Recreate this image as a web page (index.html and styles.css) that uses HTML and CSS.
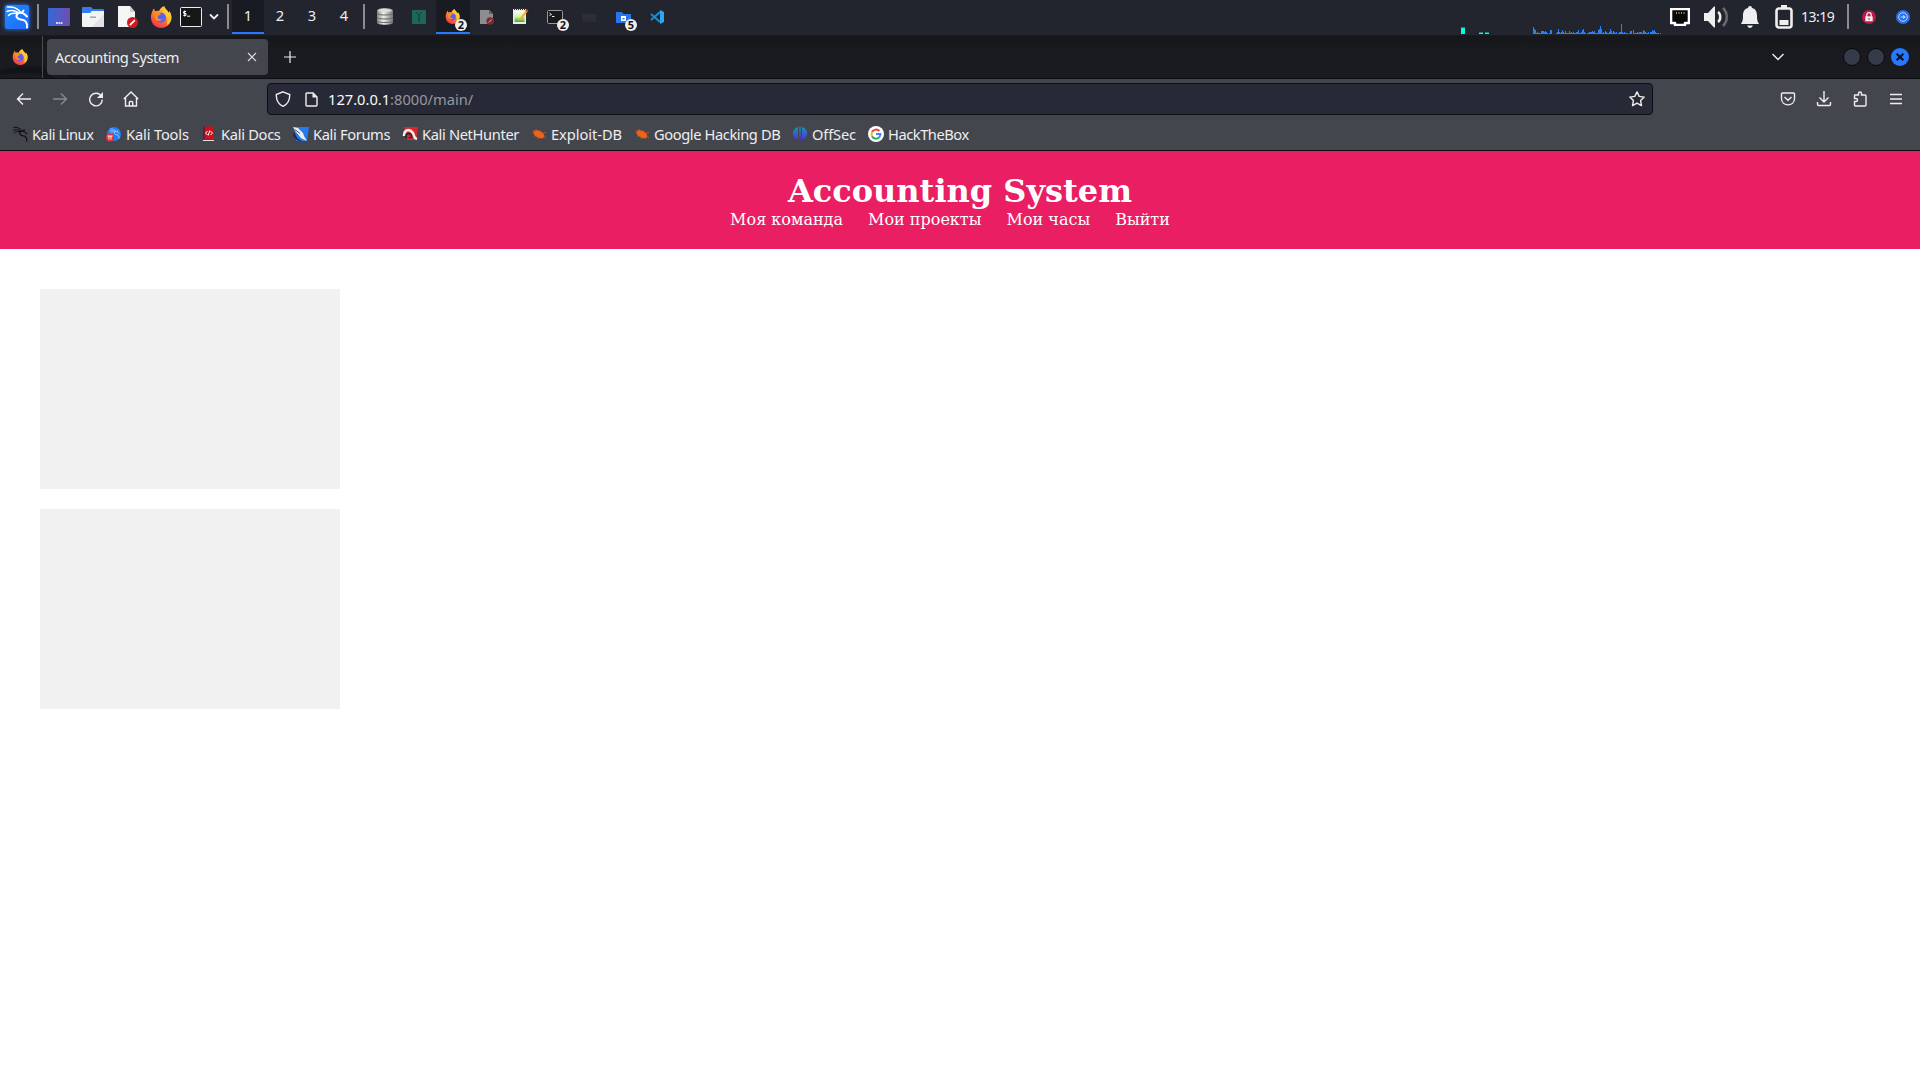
FILE: index.html
```html
<!DOCTYPE html>
<html lang="ru">
<head>
<meta charset="utf-8">
<title>Accounting System</title>
<link rel="stylesheet" href="styles.css">
</head>
<body>
<svg class="defs" width="0" height="0">
  <defs>
    <linearGradient id="fire" x1="0.8" y1="0" x2="0.3" y2="1"><stop offset="0" stop-color="#ffe14a"/><stop offset=".45" stop-color="#ff8a24"/><stop offset="1" stop-color="#f5304e"/></linearGradient>
    <linearGradient id="desk"><stop offset="0" stop-color="#3469d8"/><stop offset="1" stop-color="#704daf"/></linearGradient>
    <linearGradient id="kali" x1="0" x2="1" y1="0" y2="1"><stop offset="0" stop-color="#1d8cff"/><stop offset="1" stop-color="#2368f8"/></linearGradient>
    <linearGradient id="disk"><stop offset="0" stop-color="#888"/><stop offset=".4" stop-color="#eee"/><stop offset="1" stop-color="#777"/></linearGradient>
    <linearGradient id="offsec" x1="0" x2="0" y1="0" y2="1"><stop offset="0" stop-color="#1298b8"/><stop offset="1" stop-color="#5b22d0"/></linearGradient>
    <linearGradient id="note" x1="0" x2="0" y1="0" y2="1"><stop offset="0" stop-color="#fff"/><stop offset=".5" stop-color="#d8f2a0"/><stop offset="1" stop-color="#3fae2a"/></linearGradient>
    <symbol id="firefox" viewBox="0 0 22 22">
      <path d="M1 10C1.4 6.500 2.600 4.500 4 2.500L5.200 5.400C6.500 4.600 8 4.700 9 5C10.500 2 12 .6 14.300.2C14.500 3 18 3.600 18.500 7L19.300 5.300C21 7.500 21.700 10 21.300 13C20.500 18.500 16.500 22 11 22C5 22 .5 17 1 10Z" fill="url(#fire)"/>
      <path d="M14.300.2C14.500 3 18 3.600 18.500 7L19.300 5.300C21 7.500 21.700 10 21.300 13C20.500 16 19 18 17 19C18 13 16.500 10 13.500 7C12 5 12.500 2 14.300.2Z" fill="#ffc637"/>
      <circle cx="10.900" cy="11.700" r="5" fill="#5b61ea"/>
      <path d="M5.200 5.400C7 5 8 6 11 8C10.300 9.200 8 9.200 7.500 10.500C8 13 10 14 12.500 13C10 16.500 5 15.500 4.500 11C4.300 9 4.500 7 5.200 5.400Z" fill="#ff8b23"/>
    </symbol>
    <symbol id="dragon" viewBox="0 0 24 24">
      <path d="M2.500 2C7 1.500 12 3 15 6.500M2 6.500C5 5 9 5 13 7.500M3.500 10.500C5 8.500 8 8 11.500 8.500" fill="none" stroke="currentColor" stroke-width="1.500" stroke-linecap="round"/>
      <path d="M12 8.500C15 7 19 8 22 11.500M17 7.500L18.500 5.500M13 8.500C9.500 11.500 12.500 14.500 17 14.800C20.500 15 22.500 18 22 22.500" fill="none" stroke="currentColor" stroke-width="2" stroke-linecap="round"/>
    </symbol>
    <symbol id="bug" viewBox="0 0 16 16">
      <ellipse cx="8" cy="8.300" rx="5.800" ry="3.400" transform="rotate(28 8 8)" fill="#ee6315"/>
      <path d="M1.500 6.500L5 7M5 3L6.500 6M9.500 4.500L9.700 7M3 10L6 9.500M7 13L8.500 10M11 13L11.500 10.500M12 7L15 6.500M12 10L15 12M2 4.500L5 6" stroke="#e55c17" stroke-width=".7"/>
    </symbol>
  </defs>
</svg>

<header class="panel">
  <div class="slot kali-menu"><svg width="28" height="28" viewBox="0 0 28 28"><rect x="2" y="2" width="24" height="24" rx="2" fill="url(#kali)"/><svg x="2" y="2" width="24" height="24" color="#fff"><use href="#dragon"/></svg></svg></div>
  <i class="rule"></i>
  <div class="launchers">
    <svg width="22" height="22" viewBox="0 0 22 22"><rect y="2" width="22" height="18" rx="1" fill="url(#desk)"/><path d="M8 17h2M10.500 17h2M13 17h1.500" stroke="#fff" stroke-width="1.500"/></svg>
    <svg width="22" height="22" viewBox="0 0 22 22"><path d="M0 2q0-1 1-1h8l2 2h10q1 0 1 1v6H0z" fill="#337bef"/><path d="M0 7h8l2-2h12v15q0 1-1 1H1q-1 0-1-1z" fill="#f3f3f3"/><path d="M22 8v12q0 1-1 1H10z" fill="#e2e2e2"/><path d="M8 11.200h6" stroke="#aaa" stroke-width="1.600"/></svg>
    <svg width="22" height="24" viewBox="0 0 22 24"><path d="M2 1h12l5 6v15H2z" fill="#f5f5f5"/><path d="M14 1v6h5z" fill="#ccc"/><circle cx="16.500" cy="17.500" r="5.500" fill="#d2191d"/><path d="M13.800 20.200l5-5" stroke="#fff" stroke-width="1.800"/></svg>
    <svg width="22" height="22"><use href="#firefox"/></svg>
    <svg width="22" height="22" viewBox="0 0 22 22"><rect x=".5" y="1.500" width="21" height="19" rx="1" fill="#171717" stroke="#eee"/><path d="M6 5.500H3.700v2H6v2H3.300M4.700 4.500v6M7.200 10.200h3" fill="none" stroke="#fff"/></svg>
    <svg class="more" width="10" height="8" viewBox="0 0 10 8"><path d="M1.500 2L5 5.500 8.500 2" fill="none" stroke="#eee" stroke-width="1.800" stroke-linecap="round"/></svg>
  </div>
  <i class="rule"></i>
  <nav class="spaces"><span class="active">1</span><span>2</span><span>3</span><span>4</span></nav>
  <i class="rule"></i>
  <div class="tasks">
    <span><svg width="16" height="17" viewBox="0 0 16 17"><path d="M0 2.500C0-.5 16-.5 16 2.500v12c0 3-16 3-16 0z" fill="url(#disk)"/><path d="M0 5.500c0 2 16 2 16 0M0 9.500c0 2 16 2 16 0M0 13c0 2 16 2 16 0" stroke="#666" fill="none"/><ellipse cx="8" cy="2.500" rx="7" ry="1.500" fill="#ddd"/></svg></span>
    <span><svg width="14" height="14" viewBox="0 0 14 14"><rect width="14" height="14" rx="1" fill="#1d6659"/><path d="M4 2l3 3 3-3M7 5v7" stroke="#123f3a" fill="none"/><path d="M6 7h2v5H6z" fill="#164a43"/></svg></span>
    <span class="active"><svg width="15" height="15"><use href="#firefox"/></svg><b>2</b></span>
    <span><svg width="14" height="16" viewBox="0 0 14 16"><path d="M0 1h9l4 4v10H0z" fill="#8d8d91"/><path d="M9 1v4h4z" fill="#626267"/><circle cx="10.200" cy="12" r="3.800" fill="#882630"/><path d="M8.700 13.500l3-3" stroke="#bbb"/></svg></span>
    <span><svg width="16" height="17" viewBox="0 0 16 17"><rect y="1" width="13" height="15" fill="#e9eee5"/><rect x="1.500" y="3" width="10" height="11" fill="url(#note)"/><path d="M1 1h11" stroke="#333" stroke-width="2" stroke-dasharray="1 1"/><path d="M7 10l6-8 2 1-6 8-2.500 1z" fill="#f0b52b"/><path d="M13 1l2.500 1-1 2-2-1z" fill="#d83434"/></svg></span>
    <span><svg width="16" height="16" viewBox="0 0 16 16"><rect x=".5" y="1.500" width="15" height="13" rx="1" fill="#18191b" stroke="#999"/><path d="M2.500 4l2 1.500-2 1M5 7.500h2.500" fill="none" stroke="#eee"/></svg><b>2</b></span>
    <span><svg width="16" height="12" viewBox="0 0 16 12"><path d="M1 2h3v1h3V1l2 2h6v8H1z" fill="#2b2c36"/><path d="M2 5h11" stroke="#343540"/></svg></span>
    <span><svg width="15" height="14" viewBox="0 0 15 14"><path d="M0 2h6l1.500 2H15v9H0z" fill="#2974ee"/><path d="M5 6h5v5H5z" fill="#fff"/><path d="M6.500 8h2v1.500h-2z" fill="#2974ee"/></svg><b>5</b></span>
    <span><svg width="14" height="14" viewBox="0 0 14 14"><path d="M1 4l9 8M1 10l9-8" stroke="#168ed1" stroke-width="2"/><path d="M10 0l4 2v10l-4 2z" fill="#2ca6ed"/></svg></span>
  </div>
  <svg class="graph" width="202" height="34" viewBox="0 0 202 34">
    <path d="M0 27h4v7H0zM18 33h4v1h-4zM24 33h4v1h-4z" fill="#00ffe1"/><path d="M0 27h4v1H0zM18 32h4v1h-4zM24 32h4v1h-4z" fill="#0a8f88"/>
    <path d="M72 34v-7h1v2h1v1h1v3h1v-1h1v1h3v-2h3v1h1v-1h1v1h1v1h1v1zM88 34v-1h1v-3h2v4zM95 34v-1h1v-1h1v-3h1v3h1v1h1v-1h1v-2h1v2h1v1h1v-2h1v2h3v-2h1v2h1v-1h1v1h1v-1h1v1h2v-1h2v-2h1v3h1v1zM119 34v-1h1v-1h1v-2h1v-1h1v3h1v1h1v1zM126 34v-1h2v-1h3v-1h1v1h1v-1h1v2h3v-3h1v-1h1v-3h1v3h1v4h1v-1h1v1h1v-2h1v1h1v1h2v-1h1v-3h1v2h1v2h1v-2h1v1h1v1h1v1zM155 34v-2h1v2zM157 34v-1h1v-1h2v-8h1v8h1v1h1v-1h1v1h2v1zM166 34v-1h1v1zM168 34v-1h1v-2h2v3zM172 34v-4h1v3h3v-1h1v1h1v-1h3v1h1v-3h1v1h1v1h1v1h2v-1h1v2zM189 34v-2h2v-2h1v1h1v-1h1v2h1v1h3v1zM199 34v-1h1v1z" fill="#287ffb"/>
  </svg>
  <div class="tray">
    <svg width="20" height="18" viewBox="0 0 20 18"><path d="M1 1h18v14h-4v2H5v-2H1z" fill="#090909" stroke="#fff" stroke-width="2.600" stroke-linejoin="round"/><path d="M6.500 4v2M9 4v2M11.500 4v2M14 4v2" stroke="#a19562"/></svg>
    <svg width="25" height="22" viewBox="0 0 25 22"><path d="M0 7h4l6-6.500h1v21h-1L4 15H0z" fill="#eee"/><path d="M14 6c3 2 3 8 0 10" fill="none" stroke="#eee" stroke-width="2.500"/><path d="M19 2c5 5 5 13 0 18" fill="none" stroke="#696a6f" stroke-width="2.500"/></svg>
    <svg width="18" height="22" viewBox="0 0 18 22"><path d="M9 0q2 0 2 2c4 1 5 4 5 8 0 5 1 6 2 8H0c1-2 2-3 2-8 0-4 1-7 5-8q0-2 2-2zM6 19.500h6q-3 5-6 0z" fill="#eee"/></svg>
    <svg width="18" height="24" viewBox="0 0 18 24"><rect x="6" y="0" width="6" height="4" fill="#eee"/><rect x="1.500" y="3.500" width="15" height="19" rx="2.500" fill="none" stroke="#eee" stroke-width="2.600"/><path d="M4.500 15h9v5h-9z" fill="#eee"/></svg>
    <time>13:19</time>
    <i class="rule"></i>
    <svg width="14" height="14" viewBox="0 0 14 14"><circle cx="7" cy="7" r="7" fill="#bd1847"/><rect x="3.300" y="6.300" width="7.400" height="5" fill="#eee"/><path d="M4.800 7V4.800c0-3 4.400-3 4.400 0V7" stroke="#eee" stroke-width="1.300" fill="none"/><path d="M7 8v2" stroke="#bd1847"/></svg>
    <svg width="14" height="14" viewBox="0 0 14 14"><circle cx="7" cy="7" r="7" fill="#2670e8"/><circle cx="7" cy="7" r="4.300" fill="none" stroke="#bcd5ff"/><path d="M4.800 7h4M7.200 5.400L8.900 7 7.200 8.600" stroke="#bcd5ff" stroke-width="1.100" fill="none"/></svg>
  </div>
</header>

<div class="tabbar">
  <svg class="wallpaper" width="80" height="42" viewBox="0 0 80 42"><path d="M0 34Q18 29 43 31Q50 37 55 42H45Q40 34 0 39z" fill="#121416"/><path d="M43 29Q58 39 80 41" stroke="#121416" fill="none"/></svg>
  <svg class="view" width="16" height="16"><use href="#firefox"/></svg>
  <div class="tab"><span class="ui">Accounting System</span><svg width="10" height="10" viewBox="0 0 10 10"><path d="M1 1l8 8M9 1l-8 8" stroke="#ddd" stroke-width="1.100"/></svg></div>
  <svg class="plus" width="12" height="12" viewBox="0 0 12 12"><path d="M6 0v12M0 6h12" stroke="#eee" stroke-width="1.200"/></svg>
  <svg class="alltabs" width="14" height="8" viewBox="0 0 14 8"><path d="M1.500 1L7 6.500 12.500 1" fill="none" stroke="#eee" stroke-width="1.400"/></svg>
  <div class="winbtns"><i></i><i></i><svg width="18" height="18" viewBox="0 0 18 18"><circle cx="9" cy="9" r="9" fill="#2777ff"/><path d="M5.700 5.700l6.600 6.600M12.300 5.700l-6.600 6.600" stroke="#101322" stroke-width="2.200"/></svg></div>
</div>

<div class="toolbar">
  <div class="navicons">
    <svg width="16" height="16" viewBox="0 0 16 16"><path d="M15 8H2M7 2.500L1.500 8 7 13.500" class="ln"/></svg>
    <svg class="off" width="16" height="16" viewBox="0 0 16 16"><path d="M1 8h13M9 2.500L14.500 8 9 13.500" class="ln"/></svg>
    <svg width="16" height="16" viewBox="0 0 16 16"><path d="M13.500 5.500A6.300 6.300 0 1 0 14.300 8.500" class="ln"/><path d="M15 1v6H9z" fill="#eee"/></svg>
    <svg class="home" width="16" height="16" viewBox="0 0 16 16"><path d="M.8 8L8 1l7.200 7M2.500 7v8h11V7M6.300 15v-3.500q0-1 1-1h1.400q1 0 1 1V15" class="ln"/></svg>
  </div>
  <div class="urlbar">
    <svg width="16" height="16" viewBox="0 0 16 16"><path d="M8 .8l6.700 2.700c.2 5.500-2 9.700-6.700 11.800C3.300 13.200 1.100 9 1.300 3.500z" class="ln"/></svg>
    <svg class="page" width="13" height="15" viewBox="0 0 13 15"><path d="M1 2q0-1 1-1h6l4 4v8q0 1-1 1H2q-1 0-1-1z" class="ln"/><path d="M7.500 1v4.500H12z" fill="#eee"/></svg>
    <span class="ui url"><em>127.0.0.1</em>:8000/main/</span>
    <svg class="star" width="16" height="16" viewBox="0 0 16 16"><path d="M8 .9l2.200 4.500 5 .7-3.600 3.500.9 5L8 12.200l-4.500 2.400.9-5L.8 6.100l5-.7z" class="ln" stroke-linejoin="round"/></svg>
  </div>
  <div class="actions">
    <svg width="16" height="14" viewBox="0 0 16 14"><path d="M2.500 1h11q1 0 1 1v4.500C14.500 15 1.500 15 1.500 6.500V2q0-1 1-1zM4.500 5L8 8.300 11.500 5" class="ln"/></svg>
    <svg width="16" height="16" viewBox="0 0 16 16"><path d="M8 0v11M3.500 6.500L8 11l4.500-4.500M1.500 11v2.500q0 1 1 1h11q1 0 1-1V11" class="ln"/></svg>
    <svg width="16" height="16" viewBox="0 0 16 16"><path d="M2.500 6V4.500q0-.5.500-.5h3.500V2.500q0-1.500 1.500-1.500t1.500 1.500V4h3.500q1 0 1 1v9q0 1-1 1h-9.500q-1 0-1-1v-3.500H4q1.500 0 1.500-1.500T4 7.500H2.500z" class="ln"/></svg>
    <svg width="12" height="12" viewBox="0 0 12 12"><path d="M0 1.500h12M0 6h12M0 10.500h12" class="ln"/></svg>
  </div>
</div>

<nav class="bookmarks ui">
  <a class="b94"><svg width="16" height="16" color="#101010"><use href="#dragon"/></svg><span class="t45">Kali Linux</span></a>
  <a class="b95"><svg width="16" height="16" viewBox="0 0 16 16"><circle cx="8" cy="8" r="7" fill="#247cf5"/><svg x="3" y="2" width="11" height="11" color="#a5d2ff"><use href="#dragon"/></svg><circle cx="4" cy="11.500" r="4" fill="#df3539"/><path d="M1.500 10h5M3 10v3.500M5 10v3.500" stroke="#fff" fill="none" stroke-width=".9"/></svg><span class="t15">Kali Tools</span></a>
  <a class="b92"><svg width="16" height="16" viewBox="0 0 16 16"><path d="M2 .5h11v13H2z" fill="#c91119"/><path d="M2 .5h1.500v13H2z" fill="#342751"/><path d="M2 14h11v1H2z" fill="#ddd"/><path d="M6.500 5l-2 2 2 2M9.500 5l2 2-2 2M8.700 4.500l-1.400 5" fill="none" stroke="#fff"/></svg><span class="t30">Kali Docs</span></a>
  <a class="b109"><svg width="16" height="16" viewBox="0 0 16 16"><path d="M1 1h15l-2 14H3z" fill="#247bee"/><path d="M0 1l5 1 5 5 1 3 3 5-6-3-5-6z" fill="#eee"/><path d="M0 7q1 7 8 8-5-2-6-7zM2 3.500l5 4" stroke="#183459" fill="#18283d" stroke-width=".8"/></svg><span class="t35">Kali Forums</span></a>
  <a class="b129"><svg width="16" height="16" viewBox="0 0 16 16"><path d="M2 1h14l-2 13H5z" fill="#de2529"/><path d="M2 10C2 3 8 3 10.500 6.500S11 12 15 13" stroke="#eee" stroke-width="2.600" fill="none"/><path d="M4.500 12c-2-5 4-6 5-2 .5 2-2 2-2 1" stroke="#25282e" stroke-width="1.800" fill="none"/></svg><span class="t35">Kali NetHunter</span></a>
  <a class="b103"><svg width="16" height="16"><use href="#bug"/></svg><span class="t05">Exploit-DB</span></a>
  <a class="b158"><svg width="16" height="16"><use href="#bug"/></svg><span class="t40">Google Hacking DB</span></a>
  <a class="b76"><svg width="16" height="16" viewBox="0 0 16 16"><path d="M6 1v13C-1 12-1 3 6 1zM10 1v13C17 12 17 3 10 1zM7.300.5h1.400v15.500H7.300z" fill="url(#offsec)"/></svg><span class="t15">OffSec</span></a>
  <a><svg width="16" height="16" viewBox="0 0 16 16"><circle cx="8" cy="8" r="8" fill="#fff"/><g fill="none" stroke-width="2"><path d="M4 6.200A4.500 4.500 0 0 1 11.400 5" stroke="#ea4335"/><path d="M4 6.200a4.500 4.500 0 0 0 0 4" stroke="#fbbc05"/><path d="M4 10.200a4.500 4.500 0 0 0 7 1.300" stroke="#34a853"/><path d="M11 11.500A4.500 4.500 0 0 0 12.400 8H8" stroke="#4285f4"/></g></svg><span class="t45">HackTheBox</span></a>
</nav>

<main>
  <header class="site">
    <h1>Accounting System</h1>
    <nav class="menu">
      <a>Моя команда</a>
      <a>Мои проекты</a>
      <a>Мои часы</a>
      <a>Выйти</a>
    </nav>
  </header>
  <section class="cards">
    <div class="card"></div>
    <div class="card"></div>
  </section>
</main>
</body>
</html>
```
FILE: styles.css
```css
* { box-sizing: border-box; }
body { margin: 0; width: 1920px; height: 1080px; overflow: hidden; background: #fff; font-family: "DejaVu Serif", serif; }
svg { display: block; flex: none; }
i { display: block; flex: none; }
.defs { position: absolute; }
.ui, .panel { font-family: "Noto Sans", sans-serif; font-size: 14.670px; color: #eee; }
.ln { fill: none; stroke: #eee; stroke-width: 1.400; }
.rule { width: 2px; height: 25px; background: #8c8c8f; }

.panel { height: 36px; padding-bottom: 2px; display: flex; align-items: center; background: #23252e; border-bottom: 1px solid #1b1c20; }
.kali-menu { padding-left: 3px; width: 37px; }
.kali-menu svg { border-radius: 4px; }
.kali-menu > svg { filter: drop-shadow(0 0 2px #2777ff); }
.launchers { display: flex; align-items: center; gap: 12px; padding-left: 9px; width: 188px; }
.launchers svg:nth-child(5) { margin-left: -4px; }
.launchers .more { margin-left: -5px; }
.spaces { display: flex; height: 34px; padding-left: 3px; width: 134px; }
.spaces span { flex: none; width: 32px; line-height: 31px; text-align: center; }
.spaces .active, .tasks .active { background: #191b22; border-bottom: 2px solid #2777ff; }
.tasks { display: flex; height: 34px; padding-left: 3px; }
.tasks span { width: 34px; height: 34px; display: flex; align-items: center; justify-content: center; position: relative; }
.tasks .active { padding: 2px 2px 0 0; }
.tasks b { position: absolute; right: 3px; bottom: 3px; width: 12px; height: 12px; border-radius: 6px; background: #eee; color: #16171c; font-size: 11px; line-height: 12px; text-align: center; }
.tasks .active b { bottom: 1px; }
.graph { margin-left: 787px; }
.tray { display: flex; align-items: center; margin-left: 7px; }
.tray svg:nth-child(2) { margin-left: 14px; }
.tray svg:nth-child(3) { margin-left: 12px; }
.tray svg:nth-child(4) { margin-left: 16px; }
.tray time { width: 54px; padding-left: 8px; font-size: 14px; letter-spacing: -0.500px; line-height: 30px; }
.tray .rule { margin-right: 13px; }
.tray svg:last-child { margin-left: 20px; }

.tabbar { height: 43px; display: flex; align-items: center; background: linear-gradient(#16171a, #1a1b20 40%, #1a1b20); border-bottom: 1px solid #0d0e12; position: relative; }
.wallpaper { position: absolute; left: 0; top: 0; }
.view { margin-left: 12px; position: relative; }
.tab { margin-left: 14px; width: 226px; height: 42px; padding: 3px 0 3px 4px; border-left: 1px solid #4a4b50; display: flex; position: relative; }
.tab::before { content: ""; position: absolute; z-index: 0; left: 4px; right: 0; top: 3px; bottom: 3px; background: #44464e; border-radius: 4px; }
.tab span { position: relative; padding-left: 8px; width: 200px; line-height: 37px; letter-spacing: -0.420px; }
.tab svg { position: relative; margin-top: 13px; }
.plus { margin-left: 16px; }
.alltabs { margin-left: 1475px; }
.winbtns { margin-left: 58px; display: flex; gap: 6px; }
.winbtns i { width: 18px; height: 18px; border-radius: 9px; background: #363b49; border: 1px solid #08090c; }

.toolbar { height: 40px; background: #44464e; display: flex; align-items: center; }
.navicons { display: flex; width: 267px; padding-left: 16px; gap: 20px; }
.navicons .off { opacity: .4; }
.navicons .home { margin-left: -1px; }
.urlbar { width: 1386px; height: 32px; border: 1px solid #0d0f15; border-radius: 4px; background: #272a36; display: flex; align-items: center; padding-left: 7px; }
.page { margin-left: 14px; }
.url { flex: none; margin-left: 10px; width: 1301px; color: #96979d; }
.url em { font-style: normal; color: #fafafa; }
.actions { display: flex; align-items: center; gap: 20px; padding-left: 127px; }
.actions svg:last-child { margin-left: 2px; }

.bookmarks { height: 32px; display: flex; align-items: center; padding: 0 0 2px 12px; background: #44464e; border-bottom: 1px solid #0d0e12; }
.bookmarks a { display: flex; align-items: center; gap: 4px; white-space: nowrap; }
.b94 { width: 94px; } .b95 { width: 95px; } .b92 { width: 92px; } .b109 { width: 109px; } .b129 { width: 129px; }
.b103 { width: 103px; } .b158 { width: 158px; } .b76 { width: 76px; }
.t05 { letter-spacing: -0.050px; } .t15 { letter-spacing: -0.150px; } .t30 { letter-spacing: -0.300px; }
.t35 { letter-spacing: -0.350px; } .t40 { letter-spacing: -0.400px; } .t45 { letter-spacing: -0.450px; }

.site { height: 98px; padding: 21px 20px 19px; background: #e91e63; color: #fff; text-align: center; }
.site h1 { margin: 0; font-size: 32px; line-height: 38px; }
.menu { font-size: 16px; line-height: 20px; }
.menu a { margin-right: 20px; }
.cards { padding: 40px; display: flex; flex-direction: column; gap: 20px; }
.card { width: 300px; height: 200px; background: #f1f1f1; }
```
